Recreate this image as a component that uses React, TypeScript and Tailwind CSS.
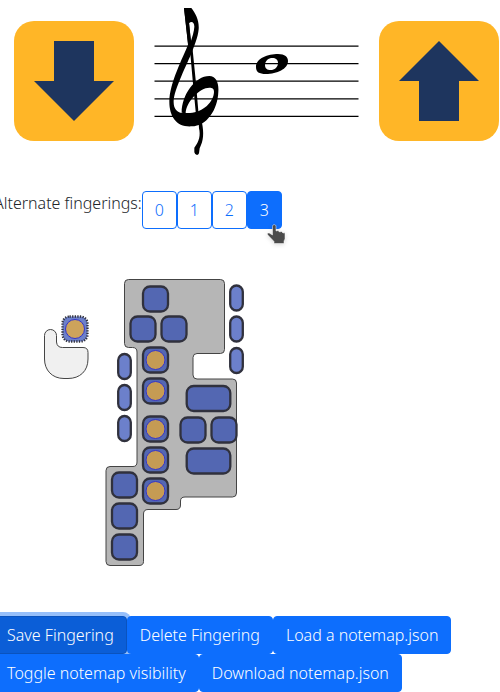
import React from "react";

const squareKeys: [number, number, boolean][] = [
  [155.5, 299, false],
  [143, 329, false],
  [174, 329, false],
  [155.5, 360, true],
  [155.5, 391, true],
  [155.5, 429, true],
  [155.5, 460, true],
  [155.5, 491, true],
  [193, 430, false],
  [224, 430, false],
  [124.5, 485, false],
  [124.5, 516, false],
  [124.5, 547, false],
];

const wideKeys: [number, number][] = [
  [208.5, 398.5],
  [208.5, 461],
];

const sideKeys: [number, number][] = [
  [124.5, 366.5],
  [124.5, 397.5],
  [124.5, 428.5],
  [236.5, 298],
  [236.5, 329],
  [236.5, 360.5],
];

function ArrowButton({ direction }: { direction: "up" | "down" }) {
  return (
    <button
      type="button"
      aria-label={direction === "up" ? "Note up" : "Note down"}
      className="mt-[13px] size-30 shrink-0 rounded-[20px] bg-[#ffb627]"
    >
      <svg viewBox="0 0 120 120" className="size-full" fill="#1e355e">
        {direction === "up" ? (
          <path d="M60 20L100 60H80V100H40V60H20Z" />
        ) : (
          <path d="M40 20H80V60H100L60 100L20 60H40Z" />
        )}
      </svg>
    </button>
  );
}

function Staff() {
  return (
    <svg viewBox="134 8 245 147" className="h-[147px] w-[245px] shrink-0" role="img" aria-label="Staff">
      <g stroke="#000" strokeWidth="1.3">
        {[46.2, 63.7, 81.2, 98.8, 116.3].map((y) => (
          <line key={y} x1="154.5" x2="358.5" y1={y} y2={y} />
        ))}
      </g>
      <g transform="translate(150 0) scale(.33333)">
        <path d="M102 24H124C138 42 148 62 146 88C144 112 132 140 126 156C112 190 72 270 71 303C70 325 80 337 97 339H120C160 337 191 305 192 276C192 266 188 263 178 263C150 263 108 305 107 340L95 338C95 285 135 228 178 228C198 228 207 248 205 275C203 330 170 378 125 379C80 382 58 350 58 305C58 250 100 170 114 134Z" />
        <path fill="#fff" d="M117 70C125 62 133 68 133 80C132 95 127 110 123 122Z" />
        <path d="M102 24H113L122 120L128 150L137 240L146 345H138L128 240L120 150L114 130Z" />
        <path d="M146 368L156 368C162 400 161 420 149 445L147 460Q145 465 141 465Q135 465 133 457V443C148 425 152 405 147 385Z" />
      </g>
      <path
        fillRule="evenodd"
        d="M256 67C256 58 268 54 278 54C285 54 288 57 288 61C288 69 277 74 266 74C259 74 256 72 256 67ZM265 65C265 69 268 70.500 272 70C276 69 278 66 278 63C278 59 275 57.500 271 58C267 59 265 62 265 65Z"
      />
    </svg>
  );
}

function FingeringChart() {
  return (
    <svg viewBox="0 229 250 387" className="block h-[387px] w-[250px]" role="img" aria-label="Saxophone fingering">
      <path
        d="M50.500 329.500A6 6 0 0 1 56.500 335.500V342Q57 347.500 62.500 347.500H83Q88 347.500 88 352.500V359C88 371 80 378.500 68 378.500H64C52 378.500 44.500 370 44.500 359V335.500A6 6 0 0 1 50.500 329.500Z"
        fill="#f0f0f0"
        stroke="#444"
      />
      <rect x="62.500" y="316.500" width="25" height="25" rx="7" fill="#6c80cb" />
      <rect x="62.500" y="316.500" width="25" height="25" rx="7" fill="none" stroke="#30313d" strokeWidth="2.300" strokeDasharray="1.300 1.300" />
      <circle cx="75" cy="329" r="9.500" fill="#cda35b" stroke="#3333cc" />
      <path
        d="M128.500 279.500H220.500Q224.500 279.500 224.500 283.500V349.500Q224.500 353.500 220.500 353.500H197Q193 353.500 193 357.500V375Q193 379 197 379H232.500Q236.500 379 236.500 383V493Q236.500 497 232.500 497H185Q180.500 497 180.500 501V505Q180.500 509.500 176 509.500H148Q143.500 509.500 143.500 514V561.500Q143.500 565.500 139 565.500H110Q106 565.500 106 561.500V470.500Q106 466.500 110 466.500H133Q137 466.500 137 462V352Q137 347.500 132.500 347.500H128.500Q124.500 347.500 124.500 343.500V283.500Q124.500 279.500 128.500 279.500Z"
        fill="#b6b6b6"
        stroke="#444"
      />
      {squareKeys.map(([x, y, pressed]) => (
        <g key={`${x}-${y}`}>
          <rect x={x - 12.5} y={y - 12.5} width="25" height="25" rx="7" fill="#5367b2" stroke="#30313d" strokeWidth="2.300" />
          {pressed && <circle cx={x} cy={y} r="9.500" fill="#c59b54" stroke="#3333cc" />}
        </g>
      ))}
      {wideKeys.map(([x, y]) => (
        <rect key={y} x={x - 21.8} y={y - 12.5} width="43.600" height="25" rx="7" fill="#5367b2" stroke="#30313d" strokeWidth="2.300" />
      ))}
      {sideKeys.map(([x, y]) => (
        <rect key={`${x}-${y}`} x={x - 6.3} y={y - 12.5} width="12.600" height="25" rx="6.300" fill="#6c80cb" stroke="#30313d" strokeWidth="2.300" />
      ))}
    </svg>
  );
}

const actionBase = "h-[38px] rounded border px-3 text-white";

export default function App() {
  return (
    <main className="overflow-hidden bg-white font-['Noto_Sans',sans-serif] text-base leading-6 font-light text-[#212529]">
      <div className="flex items-start pt-2 pl-3.5">
        <ArrowButton direction="down" />
        <Staff />
        <ArrowButton direction="up" />
      </div>

      <div className="-ml-1.5 mt-9 flex items-start">
        <span id="alternates">Alternate fingerings:</span>
        <div role="group" aria-labelledby="alternates" className="flex">
          {["0", "1", "2"].map((n) => (
            <button key={n} type="button" className="h-[38px] w-[35px] rounded border border-[#0d6efd] text-[#0d6efd]">
              {n}
            </button>
          ))}
          <div className="relative">
            <button type="button" aria-pressed="true" className="h-[38px] w-[35px] rounded border border-[#0d6efd] bg-[#0d6efd] text-white">
              3
            </button>
            <svg viewBox="0 0 20 22" className="pointer-events-none absolute top-8 left-5 h-[22px] w-5 drop-shadow-sm" aria-hidden="true">
              <path
                d="M5.500 3.500C5.500 1 9 1 9 3.500V8L11 7.500L12.500 9L14.500 8.500L16 10L18 9.800V16L17 18V20.500H7V18.500L.8 12C-.3 10.500 1.500 9.500 3 10.500L5.500 12Z"
                fill="#4a4a4a"
                stroke="#fff"
                strokeWidth=".5"
              />
            </svg>
          </div>
        </div>
      </div>

      <FingeringChart />

      <div className="-ml-1.5 flex flex-wrap">
        <button type="button" className={`${actionBase} border-[#0a53be] bg-[#0b5ed7] shadow-[0_0_0_4px_#96bffa]`}>
          Save Fingering
        </button>
        <button type="button" className={`${actionBase} relative border-[#0d6efd] bg-[#0d6efd]`}>
          Delete Fingering
        </button>
        <button type="button" className={`${actionBase} border-[#0d6efd] bg-[#0d6efd]`}>
          Load a notemap.json
        </button>
        <button type="button" className={`${actionBase} relative border-[#0d6efd] bg-[#0d6efd]`}>
          Toggle notemap visibility
        </button>
        <button type="button" className={`${actionBase} relative border-[#0d6efd] bg-[#0d6efd]`}>
          Download notemap.json
        </button>
      </div>
    </main>
  );
}
